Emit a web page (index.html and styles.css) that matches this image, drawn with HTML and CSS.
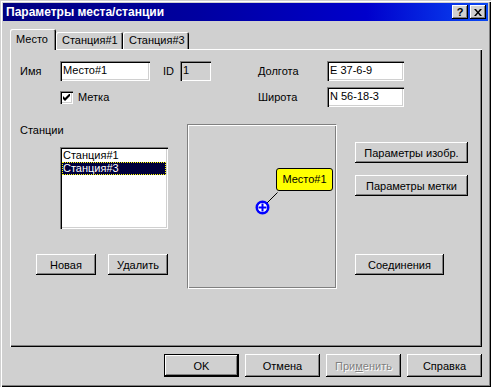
FILE: index.html
```html
<!DOCTYPE html>
<html lang="ru">
<head>
    <meta charset="UTF-8">
    <title>Параметры места/станции</title>
    <link rel="stylesheet" href="styles.css">
</head>
<body>
    <div class="window">
        <div class="titlebar">
            <span class="title">Параметры места/станции</span>
            <div class="title-btns">
                <span class="tbtn">?</span>
                <span class="tbtn">
                    <svg width="8" height="7" viewBox="0 0 8 7"><path d="M0 0h2l2 2.5L6 0h2L5 3.5 8 7H6L4 4.5 2 7H0l3-3.5z" fill="#000"/></svg>
                </span>
            </div>
        </div>

        <div class="tabs">
            <div class="tab active">Место</div>
            <div class="tab">Станция#1</div>
            <div class="tab">Станция#3</div>
        </div>

        <div class="panel">
            <div class="fields">
                <span class="lbl col-name">Имя</span>
                <div class="edit col-name-edit">Место#1</div>
                <span class="lbl col-id">ID</span>
                <div class="edit disabled col-id-edit">1</div>
                <span class="lbl col-geo">Долгота</span>
                <div class="edit col-geo-edit">E 37-6-9</div>

                <div class="check-row">
                    <span class="checkbox">
                        <svg width="7" height="7" viewBox="0 0 7 7"><path d="M0 2v3l2 2 5-5V-1L2 4z" fill="#000"/></svg>
                    </span>
                    Метка
                </div>
                <span class="lbl col-geo row-2">Широта</span>
                <div class="edit col-geo-edit row-2">N 56-18-3</div>
            </div>

            <div class="lower">
                <div class="stations">
                    <div class="stations-lbl">Станции</div>
                    <div class="listbox">
                        <div class="item">Станция#1</div>
                        <div class="item selected">Станция#3</div>
                    </div>
                    <div class="list-btns">
                        <button class="btn btn-new">Новая</button>
                        <button class="btn btn-del">Удалить</button>
                    </div>
                </div>

                <div class="preview">
                    <svg class="leader" width="146" height="161">
                        <line x1="77.5" y1="77.5" x2="88.5" y2="66.5" stroke="#000" stroke-width="1"/>
                    </svg>
                    <svg class="pin" width="15" height="15" viewBox="0 0 15 15">
                        <circle cx="7.5" cy="7.5" r="5.8" fill="#fff" stroke="#0000ff" stroke-width="2.4"/>
                        <path d="M7.5 3.5v8M3.5 7.5h8" stroke="#0000ff" stroke-width="2"/>
                    </svg>
                    <div class="tag">Место#1</div>
                </div>

                <div class="side-btns">
                    <button class="btn btn-img">Параметры изобр.</button>
                    <button class="btn btn-mark">Параметры метки</button>
                    <button class="btn btn-link">Соединения</button>
                </div>
            </div>
        </div>

        <div class="dlg-btns">
            <button class="btn btn-dlg default">OK</button>
            <button class="btn btn-dlg">Отмена</button>
            <button class="btn btn-dlg disabled">При<u>м</u>енить</button>
            <button class="btn btn-dlg">Справка</button>
        </div>
    </div>
</body>
</html>
```

FILE: styles.css
```css
body {
    margin: 0;
    background-color: #d0d0d0;
    font-family: "Liberation Sans", Arial, sans-serif;
    font-size: 11px;
    color: #000;
}
.window {
    width: 491px;
    height: 387px;
    box-sizing: border-box;
    padding: 3px;
    background-color: #d0d0d0;
    box-shadow: inset 1px 1px #d0d0d0, inset 2px 2px #fff, inset -1px -1px #000, inset -2px -2px #808080;
    display: flex;
    flex-direction: column;
}

/* title bar */
.titlebar {
    height: 18px;
    display: flex;
    align-items: center;
    justify-content: space-between;
    padding: 0 2px 0 3px;
    background: linear-gradient(to right, #000080 0%, #0000a0 40%, #0000cc 75%, #0a48f4 100%);
}
.title {
    color: #fff;
    font-weight: bold;
    font-size: 12px;
}
.title-btns {
    display: flex;
    gap: 2px;
}
.tbtn {
    width: 16px;
    height: 14px;
    box-sizing: border-box;
    display: flex;
    align-items: center;
    justify-content: center;
    background-color: #d0d0d0;
    box-shadow: inset -1px -1px #000, inset 1px 1px #fff, inset -2px -2px #808080;
    font-weight: bold;
    font-size: 11px;
    line-height: 14px;
}

/* tabs */
.tabs {
    display: flex;
    align-items: flex-end;
    height: 20px;
    margin: 8px 0 0 7px;
}
.tab {
    height: 17px;
    box-sizing: border-box;
    padding: 2px 0 0 6px;
    border-radius: 2px 2px 0 0;
    box-shadow: inset 1px 1px #fff, inset -1px 0 #000, inset -2px 0 #808080;
}
.tab:nth-child(2) {
    width: 67px;
}
.tab:nth-child(3) {
    width: 66px;
}
.tab.active {
    width: 46px;
    height: 21px;
    margin-bottom: -1px;
    padding: 4px 0 0 6px;
    background-color: #d0d0d0;
    position: relative;
    z-index: 1;
}

.panel {
    height: 298px;
    margin: 0 6px 0 7px;
    box-sizing: border-box;
    padding: 1px;
    box-shadow: inset 1px 1px #fff, inset -1px -1px #000, inset -2px -2px #808080;
}

/* upper fields */
.fields {
    display: grid;
    grid-template-columns: 40px 90px 13px 17px 31px 47px 69px 77px;
    grid-template-rows: 20px 20px;
    row-gap: 6px;
    align-items: center;
    padding: 11px 0 0 9px;
}
.col-name { grid-column: 1; grid-row: 1; }
.col-name-edit { grid-column: 2; grid-row: 1; }
.col-id { grid-column: 4; grid-row: 1; }
.col-id-edit { grid-column: 5; grid-row: 1; }
.col-geo { grid-column: 7; grid-row: 1; }
.col-geo-edit { grid-column: 8; grid-row: 1; }
.row-2 { grid-row: 2; }
.edit {
    height: 20px;
    box-sizing: border-box;
    padding: 3px 0 0 3px;
    line-height: 13px;
    background-color: #fff;
    box-shadow: inset 1px 1px #808080, inset 2px 2px #000, inset -1px -1px #fff, inset -2px -2px #d0d0d0;
}
.edit.disabled {
    background-color: #d0d0d0;
}
.check-row {
    grid-column: 2 / 6;
    grid-row: 2;
    display: flex;
    align-items: center;
    gap: 5px;
}
.checkbox {
    width: 13px;
    height: 13px;
    box-sizing: border-box;
    display: flex;
    align-items: center;
    justify-content: center;
    background-color: #fff;
    box-shadow: inset 1px 1px #808080, inset 2px 2px #000, inset -1px -1px #fff, inset -2px -2px #d0d0d0;
}

/* lower part */
.lower {
    display: flex;
    margin-top: 17px;
    padding-left: 9px;
}
.stations {
    width: 167px;
}
.stations-lbl {
    line-height: 13px;
}
.listbox {
    width: 108px;
    height: 82px;
    box-sizing: border-box;
    margin: 10px 0 0 40px;
    padding: 2px;
    background-color: #fff;
    box-shadow: inset 1px 1px #808080, inset 2px 2px #000, inset -1px -1px #fff, inset -2px -2px #d0d0d0;
}
.item {
    height: 13px;
    line-height: 13px;
    padding-left: 1px;
}
.item.selected {
    background-color: #00003c;
    color: #fff;
    outline: 1px dotted #ffff00;
    outline-offset: -1px;
}
.list-btns {
    display: flex;
    margin: 25px 0 0 16px;
    gap: 12px;
}

.btn {
    height: 21px;
    box-sizing: border-box;
    padding: 0;
    border: none;
    font-family: inherit;
    font-size: 11px;
    color: #000;
    background-color: #d0d0d0;
    box-shadow: inset -1px -1px #000, inset 1px 1px #fff, inset -2px -2px #808080;
}
.btn-new,
.btn-del {
    width: 60px;
}

.preview {
    width: 150px;
    height: 165px;
    box-sizing: border-box;
    position: relative;
    border: 1px solid;
    border-color: #808080 #fff #fff #808080;
    box-shadow: inset 1px 1px #fff, inset -1px -1px #808080;
}
.leader {
    position: absolute;
    left: 1px;
    top: 1px;
}
.pin {
    position: absolute;
    left: 67px;
    top: 75px;
}
.tag {
    position: absolute;
    left: 88px;
    top: 43px;
    width: 57px;
    height: 23px;
    box-sizing: border-box;
    border: 1px solid #000;
    border-radius: 3px;
    background-color: #ffff00;
    line-height: 21px;
    text-align: center;
}

.side-btns {
    display: flex;
    flex-direction: column;
    align-items: flex-start;
    padding: 18px 0 0 18px;
}
.btn-img,
.btn-mark {
    width: 113px;
}
.btn-mark {
    margin-top: 12px;
}
.btn-link {
    width: 89px;
    margin-top: 58px;
}

/* dialog buttons */
.dlg-btns {
    display: flex;
    justify-content: flex-end;
    gap: 6px;
    margin-top: 7px;
    padding-right: 6px;
}
.btn-dlg {
    width: 75px;
    height: 23px;
}
.btn-dlg.default {
    box-shadow: inset 0 0 0 1px #000, inset -2px -2px #000, inset 2px 2px #fff, inset -3px -3px #808080;
}
.btn-dlg.disabled {
    color: #808080;
    text-shadow: 1px 1px #fff;
}
```
